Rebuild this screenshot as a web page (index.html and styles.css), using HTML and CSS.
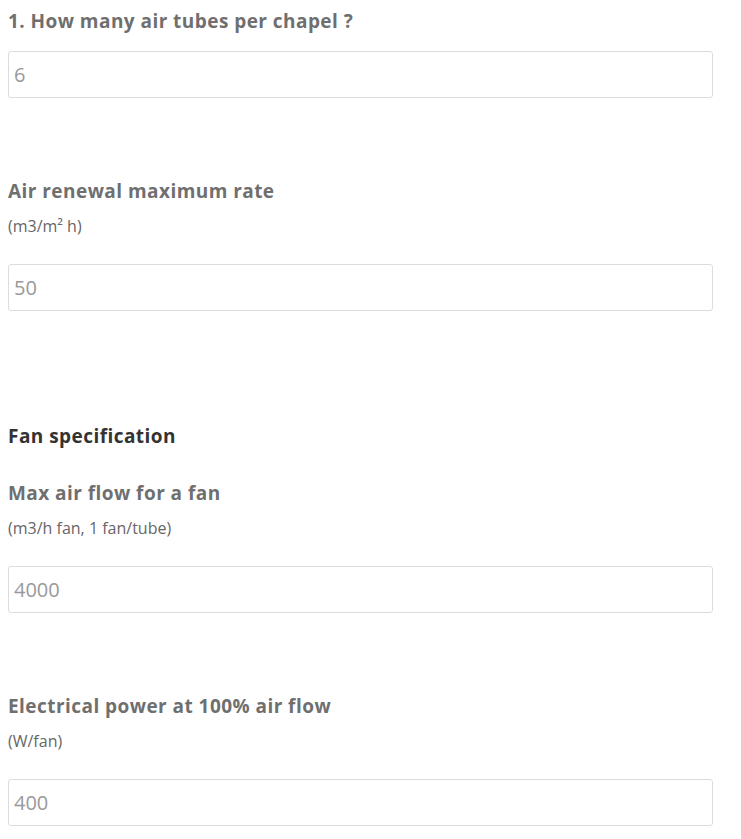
FILE: index.html
```html
<!DOCTYPE html>
<html lang="en">
<head>
  <meta charset="UTF-8">
  <title>Ventilation</title>
  <link rel="stylesheet" href="styles.css">
</head>
<body>

  <div class="form">
    <div class="field first">
      <label class="label">1. How many air tubes per chapel ?</label>
      <input class="input" type="text" placeholder="6">
    </div>

    <div class="field">
      <label class="label">Air renewal maximum rate</label>
      <p class="hint">(m3/m² h)</p>
      <input class="input" type="text" placeholder="50">
    </div>

    <h3 class="section">Fan specification</h3>

    <div class="field after-section">
      <label class="label">Max air flow for a fan</label>
      <p class="hint">(m3/h fan, 1 fan/tube)</p>
      <input class="input" type="text" placeholder="4000">
    </div>

    <div class="field">
      <label class="label">Electrical power at 100% air flow</label>
      <p class="hint">(W/fan)</p>
      <input class="input" type="text" placeholder="400">
    </div>
  </div>

</body>
</html>
```

FILE: styles.css
```css
body {
  margin: 0;
  padding: 8px 8px 0;
  background: #fff;
  font-family: 'Open Sans', sans-serif;
}

.form {
  width: 705px;
}

.field {
  display: flex;
  flex-direction: column;
  margin-top: 80px;
}

.field.first {
  margin-top: 0;
}

.field.after-section {
  margin-top: 31px;
}

.label {
  font-size: 19px;
  line-height: 26px;
  font-weight: 700;
  letter-spacing: 0.45px;
  color: #6f6f6f;
  margin-bottom: 17px;
}

.hint {
  margin: -5px 0 28px;
  font-size: 16px;
  line-height: 20px;
  color: #666;
}

.section {
  margin: 112px 0 0;
  font-size: 19px;
  line-height: 26px;
  font-weight: 700;
  letter-spacing: 0.45px;
  color: #333;
}

.input {
  box-sizing: border-box;
  width: 100%;
  height: 47px;
  margin: 0;
  padding: 0 5px;
  border: 1px solid #dcdcdc;
  border-radius: 3px;
  font-family: 'Open Sans', sans-serif;
  font-size: 20px;
  color: #555;
  outline: none;
}

.input::placeholder {
  color: #999;
}
```
